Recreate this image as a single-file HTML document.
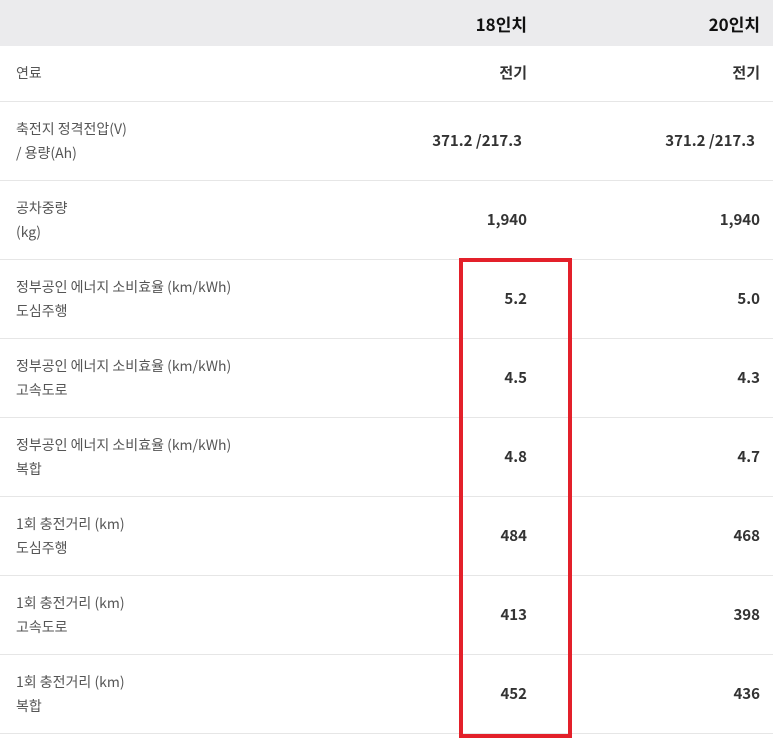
<!DOCTYPE html>
<html><head><meta charset="utf-8"><style>
body{margin:0;width:773px;height:735px;overflow:hidden;background:#fff;font-family:"Noto Sans CJK KR",sans-serif;position:relative}
.hd{position:absolute;left:0;top:0;width:773px;height:46px;background:#ebebed}
.r{position:absolute;left:0;width:773px;border-bottom:1px solid #e6e6e6;box-sizing:border-box}
.l{position:absolute;left:16px;font-size:14px;color:#555;line-height:24px}
.v{position:absolute;font-size:15px;font-weight:bold;color:#333;text-align:right;line-height:20px}
.a{right:246px}.b{right:13px}
.p{padding-right:5px}
.h{position:absolute;top:12px;font-size:17px;font-weight:bold;color:#111;line-height:24px}
.box{position:absolute;left:459px;top:258px;width:113px;height:480px;border:4px solid #e3202a;box-sizing:border-box}
</style></head><body>
<div class="hd"><span class="h a">18인치</span><span class="h b">20인치</span></div>
<div class="r" style="top:46px;height:56px"><span class="l" style="top:15px">연료</span><span class="v a" style="top:17px">전기</span><span class="v b" style="top:17px">전기</span></div>
<div class="r" style="top:102px;height:79px"><span class="l" style="top:15px">축전지 정격전압(V)<br>/ 용량(Ah)</span><span class="v a p" style="top:29px">371.2 /217.3</span><span class="v b p" style="top:29px">371.2 /217.3</span></div>
<div class="r" style="top:181px;height:79px"><span class="l" style="top:15px">공차중량<br>(kg)</span><span class="v a" style="top:29px">1,940</span><span class="v b" style="top:29px">1,940</span></div>
<div class="r" style="top:260px;height:79px"><span class="l" style="top:15px">정부공인 에너지 소비효율 (km/kWh)<br>도심주행</span><span class="v a" style="top:29px">5.2</span><span class="v b" style="top:29px">5.0</span></div>
<div class="r" style="top:339px;height:79px"><span class="l" style="top:15px">정부공인 에너지 소비효율 (km/kWh)<br>고속도로</span><span class="v a" style="top:29px">4.5</span><span class="v b" style="top:29px">4.3</span></div>
<div class="r" style="top:418px;height:79px"><span class="l" style="top:15px">정부공인 에너지 소비효율 (km/kWh)<br>복합</span><span class="v a" style="top:29px">4.8</span><span class="v b" style="top:29px">4.7</span></div>
<div class="r" style="top:497px;height:79px"><span class="l" style="top:15px">1회 충전거리 (km)<br>도심주행</span><span class="v a" style="top:29px">484</span><span class="v b" style="top:29px">468</span></div>
<div class="r" style="top:576px;height:79px"><span class="l" style="top:15px">1회 충전거리 (km)<br>고속도로</span><span class="v a" style="top:29px">413</span><span class="v b" style="top:29px">398</span></div>
<div class="r" style="top:655px;height:79px"><span class="l" style="top:15px">1회 충전거리 (km)<br>복합</span><span class="v a" style="top:29px">452</span><span class="v b" style="top:29px">436</span></div>
<div class="box"></div>
</body></html>
